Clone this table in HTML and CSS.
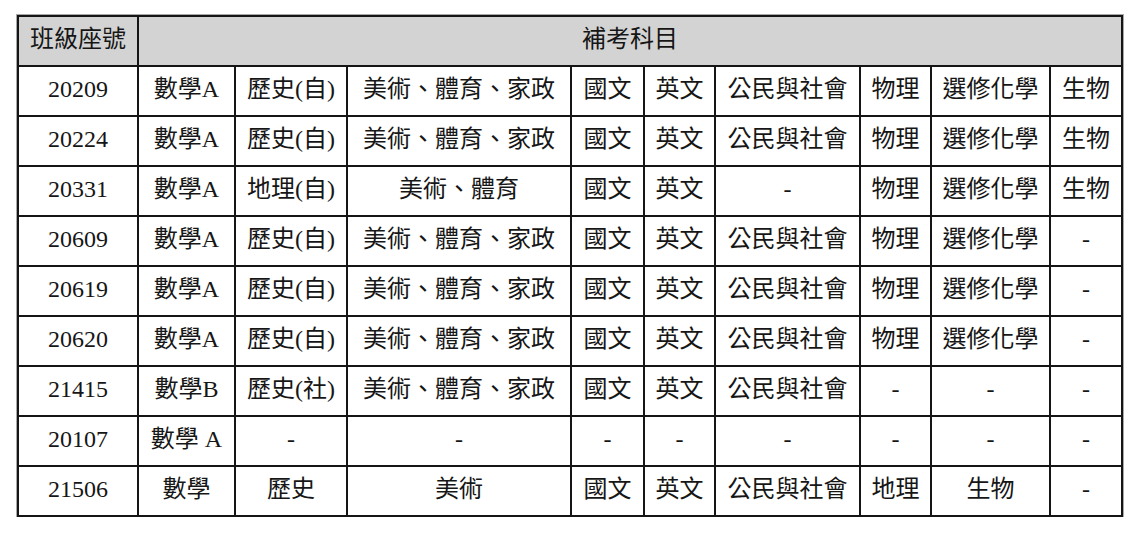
FILE: index.html
```html
<!DOCTYPE html>
<html>
<head>
<meta charset="utf-8">
<title>補考科目</title>
<link rel="stylesheet" href="styles.css">
</head>
<body>
<div class="wrap">
<table class="exam">
  <colgroup>
    <col class="c1"><col class="c2"><col class="c3"><col class="c4"><col class="c5">
    <col class="c6"><col class="c7"><col class="c8"><col class="c9"><col class="c10">
  </colgroup>
  <thead>
    <tr><th>班級座號</th><th colspan="9">補考科目</th></tr>
  </thead>
  <tbody>
    <tr><td>20209</td><td>數學A</td><td>歷史(自)</td><td>美術、體育、家政</td><td>國文</td><td>英文</td><td>公民與社會</td><td>物理</td><td>選修化學</td><td>生物</td></tr>
    <tr><td>20224</td><td>數學A</td><td>歷史(自)</td><td>美術、體育、家政</td><td>國文</td><td>英文</td><td>公民與社會</td><td>物理</td><td>選修化學</td><td>生物</td></tr>
    <tr><td>20331</td><td>數學A</td><td>地理(自)</td><td>美術、體育</td><td>國文</td><td>英文</td><td>-</td><td>物理</td><td>選修化學</td><td>生物</td></tr>
    <tr><td>20609</td><td>數學A</td><td>歷史(自)</td><td>美術、體育、家政</td><td>國文</td><td>英文</td><td>公民與社會</td><td>物理</td><td>選修化學</td><td>-</td></tr>
    <tr><td>20619</td><td>數學A</td><td>歷史(自)</td><td>美術、體育、家政</td><td>國文</td><td>英文</td><td>公民與社會</td><td>物理</td><td>選修化學</td><td>-</td></tr>
    <tr><td>20620</td><td>數學A</td><td>歷史(自)</td><td>美術、體育、家政</td><td>國文</td><td>英文</td><td>公民與社會</td><td>物理</td><td>選修化學</td><td>-</td></tr>
    <tr><td>21415</td><td>數學B</td><td>歷史(社)</td><td>美術、體育、家政</td><td>國文</td><td>英文</td><td>公民與社會</td><td>-</td><td>-</td><td>-</td></tr>
    <tr><td>20107</td><td>數學 A</td><td>-</td><td>-</td><td>-</td><td>-</td><td>-</td><td>-</td><td>-</td><td>-</td></tr>
    <tr><td>21506</td><td>數學</td><td>歷史</td><td>美術</td><td>國文</td><td>英文</td><td>公民與社會</td><td>地理</td><td>生物</td><td>-</td></tr>
  </tbody>
</table>
</div>
</body>
</html>
```

FILE: styles.css
```css
html, body {
  margin: 0;
  padding: 0;
  background: #ffffff;
}

.wrap {
  padding: 15px 0 0 17px;
}

.exam {
  border-collapse: separate;
  border-spacing: 0;
  table-layout: fixed;
  width: 1106px;
  border-top: 2px solid #151515;
  border-left: 2px solid #151515;
  box-shadow: 0 0 0 1px #a8a8a8;
  font-family: "Liberation Serif", "Times New Roman", Tinos, "DejaVu Serif", "Noto Sans CJK TC", serif;
  font-size: 24px;
  color: #161616;
}

.c1 { width: 120px; }
.c2 { width: 97px; }
.c3 { width: 112px; }
.c4 { width: 224px; }
.c5 { width: 73px; }
.c6 { width: 71px; }
.c7 { width: 145px; }
.c8 { width: 71px; }
.c9 { width: 119px; }
.c10 { width: 72px; }

.exam th,
.exam td {
  box-sizing: border-box;
  height: 50px;
  padding: 0 2px 4px;
  border-right: 2px solid #151515;
  border-bottom: 2px solid #151515;
  text-align: center;
  vertical-align: middle;
  font-family: inherit;
  font-weight: normal;
  white-space: nowrap;
  line-height: 1;
}

.exam th {
  background: #d3d3d3;
}
```
